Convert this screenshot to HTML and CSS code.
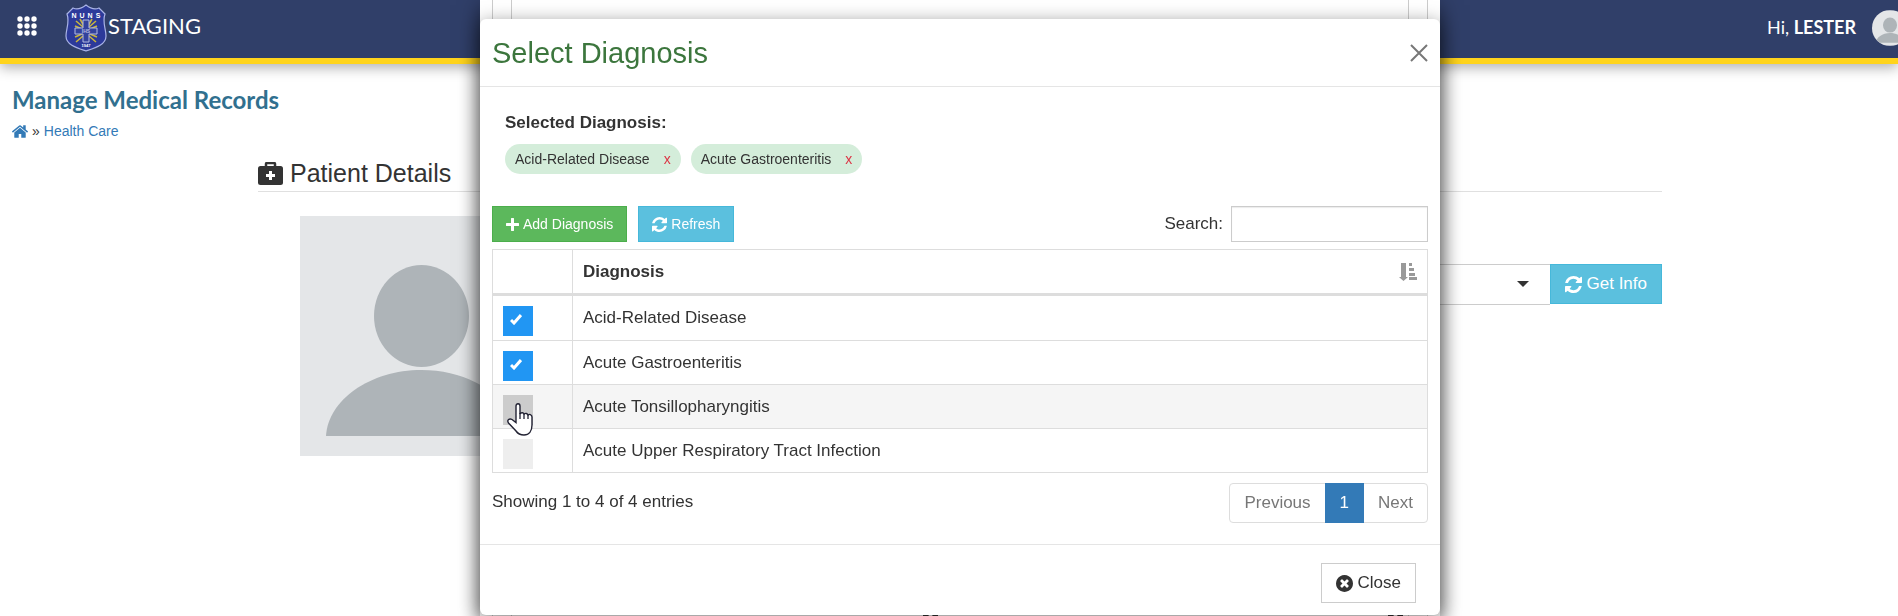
FILE: index.html
```html
<!DOCTYPE html>
<html lang="en">
<head>
<meta charset="utf-8">
<title>Manage Medical Records</title>
<link rel="stylesheet" href="styles.css">
</head>
<body>
<svg class="sprite" aria-hidden="true">
  <symbol id="i-refresh" viewBox="0 0 1536 1536"><path d="M1511 928q0 5-1 7-64 268-268 434.500t-478 166.500q-146 0-282.500-55t-243.500-157l-129 129q-19 19-45 19t-45-19-19-45v-448q0-26 19-45t45-19h448q26 0 45 19t19 45-19 45l-137 137q71 66 161 102t187 36q134 0 250-65t186-179q11-17 53-117 8-23 30-23h192q13 0 22.500 9.500t9.500 22.500zm25-800v448q0 26-19 45t-45 19h-448q-26 0-45-19t-19-45 19-45l138-138q-148-137-349-137-134 0-250 65t-186 179q-11 17-53 117-8 23-30 23h-199q-13 0-22.500-9.500t-9.500-22.500v-7q65-268 270-434.500t480-166.500q146 0 284 55.500t245 156.500l130-129q19-19 45-19t45 19 19 45z"/></symbol>
  <symbol id="i-person" viewBox="0 0 243 240"><rect width="243" height="240" fill="#e4e6e8"/><ellipse cx="121.500" cy="100" rx="47.500" ry="51" fill="#aeb4b8"/><path d="M26 220C28 184 70 154 121.500 154S215 184 217 220z" fill="#aeb4b8"/></symbol>
</svg>

<header class="topbar">
  <button class="apps" type="button" aria-label="Applications">
    <svg viewBox="0 0 20 20" width="20" height="20" fill="#fff"><circle cx="3" cy="3" r="2.700"/><circle cx="10" cy="3" r="2.700"/><circle cx="17" cy="3" r="2.700"/><circle cx="3" cy="10" r="2.700"/><circle cx="10" cy="10" r="2.700"/><circle cx="17" cy="10" r="2.700"/><circle cx="3" cy="17" r="2.700"/><circle cx="10" cy="17" r="2.700"/><circle cx="17" cy="17" r="2.700"/></svg>
  </button>
  <a class="brand" href="#">
    <svg viewBox="0 0 42 48" width="42" height="48">
      <path d="M21 1C16 5 12 6 8 4L2 10C5 18 1 25 1 32C1 41 12 44 21 47C30 44 41 41 41 32C41 25 37 18 40 10L34 4C30 6 26 5 21 1Z" fill="#2c3a9a" stroke="#a9b3e6" stroke-width="1.200"/>
      <path d="M11 17l7 6M31 17l-7 6M10 22l7 3M32 22l-7 3M11 38l7-6M31 38l-7-6M10 33l7-3M32 33l-7-3M15 15l4 7M27 15l-4 7" stroke="#c9b53c" stroke-width="1.600"/>
      <path d="M18 16h6v8h8v6h-8v8h-6v-8h-8v-6h8z" fill="#33429c" stroke="#b4bbe0"/>
      <text class="crest-name" y="14"><tspan x="9">N</tspan><tspan x="17">U</tspan><tspan x="25">N</tspan><tspan x="33">S</tspan></text>
      <text class="crest-small" x="21" y="29">IHS</text>
      <text class="crest-year" x="21" y="43">1947</text>
    </svg>
    <span>STAGING</span>
  </a>
  <a class="user" href="#">
    <span>Hi, <b>LESTER</b></span>
    <svg class="user-pic" viewBox="0 0 240 240" width="36" height="36"><use href="#i-person"/></svg>
  </a>
</header>

<main class="page">
  <h1>Manage Medical Records</h1>
  <nav class="crumbs">
    <a href="#" aria-label="Home"><svg viewBox="90 250 1612 1290" width="16" height="13" fill="currentColor"><path d="M1472 992v480q0 26-19 45t-45 19h-384v-384h-256v384h-384q-26 0-45-19t-19-45v-480q0-1 .5-3t.5-3l575-474 575 474q1 2 1 6zm223-69l-62 74q-8 9-21 11h-3q-13 0-21-7l-692-577-692 577q-12 8-24 7-13-2-21-11l-62-74q-8-10-7-23.500t11-21.500l719-599q32-26 76-26t76 26l244 204v-195q0-14 9-23t23-9h192q14 0 23 9t9 23v408l219 182q10 8 11 21.500t-7 23.500z"/></svg></a>
    <span>»</span>
    <a href="#">Health Care</a>
  </nav>
  <section class="patient">
    <h2>
      <svg viewBox="0 0 25 23" width="25" height="23"><path d="M8 5V2q0-1 1-1h7q1 0 1 1v3" fill="none" stroke="#333" stroke-width="2.500"/><rect y="4" width="25" height="19" rx="2.500" fill="#333"/><path d="M11 9h3v3h3v3h-3v3h-3v-3H8v-3h3z" fill="#fff"/></svg>
      Patient Details
    </h2>
    <div class="patient-body">
      <svg class="portrait" viewBox="0 0 243 240" width="243" height="240"><use href="#i-person"/></svg>
      <form class="lookup">
        <select aria-label="Patient"><option></option></select>
        <svg class="caret" viewBox="0 0 12 6" width="12" height="6"><path d="M0 0h12L6 6z" fill="#333"/></svg>
        <button class="btn btn-info" type="button"><svg width="17" height="17" fill="#fff"><use href="#i-refresh"/></svg>Get Info</button>
      </form>
    </div>
  </section>
</main>

<div class="overlay">
  <div class="record">
    <div class="record-frame">
      <div class="record-tools"><i></i><i></i></div>
    </div>
  </div>
</div>

<div class="overlay">
  <div class="dialog" role="dialog" aria-labelledby="dlg-title">
    <div class="dialog-head">
      <h2 id="dlg-title">Select Diagnosis</h2>
      <button class="dismiss" type="button" aria-label="Dismiss"><svg viewBox="0 0 18 18" width="18" height="18"><path d="M1 1l16 16M17 1L1 17" stroke="#777" stroke-width="2"/></svg></button>
    </div>
    <div class="dialog-body">
      <div class="selected">
        <strong>Selected Diagnosis:</strong>
        <div class="chips">
          <span class="chip">Acid-Related Disease <button type="button">x</button></span>
          <span class="chip">Acute Gastroenteritis <button type="button">x</button></span>
        </div>
      </div>
      <div class="toolbar">
        <button class="btn btn-small btn-add" type="button"><svg viewBox="0 0 13 13" width="13" height="13"><path d="M6.500 1v11M1 6.500h11" stroke="#fff" stroke-width="3" stroke-linecap="round"/></svg>Add Diagnosis</button>
        <button class="btn btn-small btn-info" type="button"><svg width="15" height="15" fill="#fff"><use href="#i-refresh"/></svg>Refresh</button>
        <label class="search">Search: <input type="search"></label>
      </div>
      <table>
        <thead>
          <tr><th class="pick"></th><th><div class="sort">Diagnosis <svg viewBox="0 0 18 18" width="18" height="18" fill="#999"><path d="M2 0h5v14h2l-4.500 4-4.500-4h2zM10 0h3v3h-3zM10 5h5v3h-5zM10 10h6v3h-6zM10 14h8v3h-8z"/></svg></div></th></tr>
        </thead>
        <tbody>
          <tr><td class="pick"><span class="tick"><input id="d1" type="checkbox" checked><svg viewBox="0 0 12 11" width="12" height="11"><path d="M1 6l3 3 7-8" fill="none" stroke="#fff" stroke-width="3"/></svg></span></td><td><label for="d1">Acid-Related Disease</label></td></tr>
          <tr><td class="pick"><span class="tick"><input id="d2" type="checkbox" checked><svg viewBox="0 0 12 11" width="12" height="11"><path d="M1 6l3 3 7-8" fill="none" stroke="#fff" stroke-width="3"/></svg></span></td><td><label for="d2">Acute Gastroenteritis</label></td></tr>
          <tr class="hovered"><td class="pick"><span class="tick"><input id="d3" type="checkbox"><svg class="pointer" viewBox="0 0 26 33" width="26" height="33"><path d="M9 3c0-3 4-3 4 0v8c1-2 4-1.500 4 .5 1-2 4-1 4 1 1-2 4-1 4 1.500V22c0 6-3 10-8 10-4 0-6-1-8-4L1.500 20c-2-3 1-5 3.500-3.500L9 19.500z" fill="#fff" stroke="#223" stroke-width="1.400"/><path d="M13 10v6M17 11v5M21 12v4" stroke="#223" stroke-width="1.300"/></svg></span></td><td><label for="d3">Acute Tonsillopharyngitis</label></td></tr>
          <tr><td class="pick"><span class="tick"><input id="d4" type="checkbox"></span></td><td><label for="d4">Acute Upper Respiratory Tract Infection</label></td></tr>
        </tbody>
      </table>
      <div class="table-foot">
        <span>Showing 1 to 4 of 4 entries</span>
        <nav class="pager"><a href="#">Previous</a><a class="current" href="#">1</a><a href="#">Next</a></nav>
      </div>
    </div>
    <div class="dialog-foot">
      <button class="btn btn-plain" type="button"><svg viewBox="128 128 1536 1536" width="17" height="17" fill="#333"><path d="M1277 1122q0-26-19-45l-181-181 181-181q19-19 19-45 0-27-19-46l-90-90q-19-19-46-19-26 0-45 19l-181 181-181-181q-19-19-45-19-27 0-46 19l-90 90q-19 19-19 46 0 26 19 45l181 181-181 181q-19 19-19 45 0 27 19 46l90 90q19 19 46 19 26 0 45-19l181-181 181 181q19 19 45 19 27 0 46-19l90-90q19-19 19-46zm387-226q0 209-103 385.500t-279.500 279.500-385.500 103-385.500-103-279.500-279.500-103-385.500 103-385.500 279.500-279.500 385.500-103 385.500 103 279.500 279.500 103 385.500z"/></svg>Close</button>
    </div>
  </div>
</div>
</body>
</html>
```
FILE: styles.css
```css
* { box-sizing: border-box; }
body {
  margin: 0;
  overflow: hidden;
  background: #fff;
  color: #333;
  font: 17px/24px "Liberation Sans", Arial, sans-serif;
}
button, input, select { font: inherit; color: inherit; }
button { padding: 0; border: 0; background: none; }
a { color: #337ab7; text-decoration: none; }
h1, h2 { margin: 0; font-weight: 400; }
svg { display: block; flex: none; }
.sprite { position: absolute; width: 0; height: 0; }

.topbar {
  display: flex;
  align-items: flex-start;
  height: 64px;
  padding-left: 17px;
  background: #303f69;
  border-bottom: 6px solid #ffd41c;
  box-shadow: 0 4px 12px rgba(0, 0, 0, .3);
}
.apps { margin-top: 16px; }
.brand {
  display: flex;
  gap: 1px;
  margin: 4px 0 0 28px;
  color: #fff;
  font: 22px/44px Lato, sans-serif;
}
.crest-name, .crest-small, .crest-year {
  font-family: "Liberation Sans", Arial, sans-serif;
  font-weight: 700;
  text-anchor: middle;
  fill: #fff;
}
.crest-name { font-size: 7px; }
.crest-small { font-size: 5px; fill: #b4bbe0; }
.crest-year { font-size: 4px; }
.user {
  display: flex;
  gap: 16px;
  margin: 10px -10px 0 auto;
  color: #fff;
  font: 18px/34px Lato, sans-serif;
}
.user-pic { border-radius: 50%; }

.page { padding: 20px 12px; }
.page h1 { color: #31708f; font: 700 24px/32px Lato, sans-serif; }
.crumbs {
  display: flex;
  align-items: center;
  gap: 4px;
  margin-top: 3px;
  font-size: 14px;
}
.patient { margin: 14px 224px 0 246px; }
.patient h2 {
  display: flex;
  align-items: center;
  gap: 7px;
  height: 35px;
  padding-bottom: 2px;
  border-bottom: 1px solid #e0e0e0;
  font-size: 25px;
}
.patient-body {
  display: flex;
  justify-content: space-between;
  align-items: flex-start;
  padding: 24px 0 0 42px;
}
.lookup { display: flex; position: relative; margin-top: 48px; }
.lookup select {
  width: 400px;
  height: 41px;
  border: 1px solid #ccc;
  border-right: 0;
  background: #fff;
  appearance: none;
}
.caret { position: absolute; top: 17px; right: 133px; }

.btn {
  display: inline-flex;
  align-items: center;
  justify-content: center;
  gap: 5px;
  height: 40px;
  padding: 0 14px;
  border: 1px solid;
  white-space: nowrap;
}
.btn-small { height: 36px; padding: 0 13px; gap: 4px; font-size: 14px; }
.btn-add { background: #5cb85c; border-color: #4cae4c; color: #fff; }
.btn-info { background: #5bc0de; border-color: #46b8da; color: #fff; }
.btn-plain { background: #fff; border-color: #ccc; }

.overlay {
  position: fixed;
  inset: 0;
  display: flex;
  justify-content: center;
  align-items: flex-start;
  padding-left: 22px;
}
.record, .dialog {
  width: min(960px, 100%);
  background: #fff;
  box-shadow: 0 5px 20px rgba(0, 0, 0, .5);
}
.record { height: 100%; padding: 0 12px; }
.record-frame {
  height: 100%;
  padding: 0 18px;
  border: solid #ccc;
  border-width: 0 1px;
}
.record-tools {
  display: flex;
  align-items: flex-end;
  justify-content: space-between;
  height: 100%;
  padding: 0 5px 0 411px;
  border: solid #ccc;
  border-width: 0 1px;
}
.record-tools i { width: 15px; border-bottom: 2px dashed #333; }

.dialog { margin-top: 19px; border-radius: 6px; }
.dialog-head {
  display: flex;
  justify-content: space-between;
  align-items: center;
  height: 68px;
  padding: 0 12px;
  border-bottom: 1px solid #e5e5e5;
}
.dialog-head h2 { color: #3c763d; font-size: 29px; line-height: 34px; }
.dialog-body { padding: 24px 12px 21px; }
.selected { padding: 0 13px; }
.selected strong { display: block; }
.chips { display: flex; gap: 10px; margin-top: 9px; }
.chip {
  display: flex;
  gap: 14px;
  height: 30px;
  padding: 0 10px;
  border-radius: 15px;
  background: #d4edda;
  font-size: 14px;
  line-height: 30px;
}
.chip button { color: #dc3545; }
.toolbar { display: flex; gap: 11px; margin: 32px 0 7px; }
.search { display: flex; align-items: center; gap: 8px; margin-left: auto; }
.search input {
  width: 197px;
  height: 36px;
  border: 1px solid #ccc;
  background: #fff;
  box-shadow: inset 0 1px 1px rgba(0, 0, 0, .08);
}

table {
  width: 100%;
  border: 1px solid #ddd;
  border-collapse: separate;
  border-spacing: 0;
}
th { height: 46px; border-bottom: 3px solid #ddd; }
th, td { padding: 0 10px; text-align: left; }
td { height: 44px; }
tr + tr td { border-top: 1px solid #ddd; }
.pick { width: 80px; border-right: 1px solid #ddd; }
td.pick { padding-top: 8px; padding-bottom: 2px; }
.sort { display: flex; justify-content: space-between; align-items: center; }
.hovered { background: #f5f5f5; }
.tick { position: relative; display: grid; width: 30px; height: 30px; }
.tick > * { grid-area: 1 / 1; }
.tick input {
  width: 30px;
  height: 30px;
  margin: 0;
  background: #eee;
  appearance: none;
}
.tick input:checked { background: #2196f3; }
.hovered .tick input { background: #ccc; }
.tick svg { margin: 8px 7px; }
.tick .pointer { position: absolute; top: 8px; left: 4px; z-index: 1; margin: 0; }

.table-foot { display: flex; justify-content: space-between; padding-top: 10px; line-height: 38px; }
.pager {
  display: flex;
  height: 40px;
  border: 1px solid #ddd;
  border-radius: 4px;
}
.pager a { padding: 0 14px; color: #777; }
.pager .current { margin: -1px 0; padding: 1px 15px; background: #337ab7; color: #fff; }
.dialog-foot {
  display: flex;
  justify-content: flex-end;
  padding: 18px 24px 12px;
  border-top: 1px solid #e5e5e5;
}
```
